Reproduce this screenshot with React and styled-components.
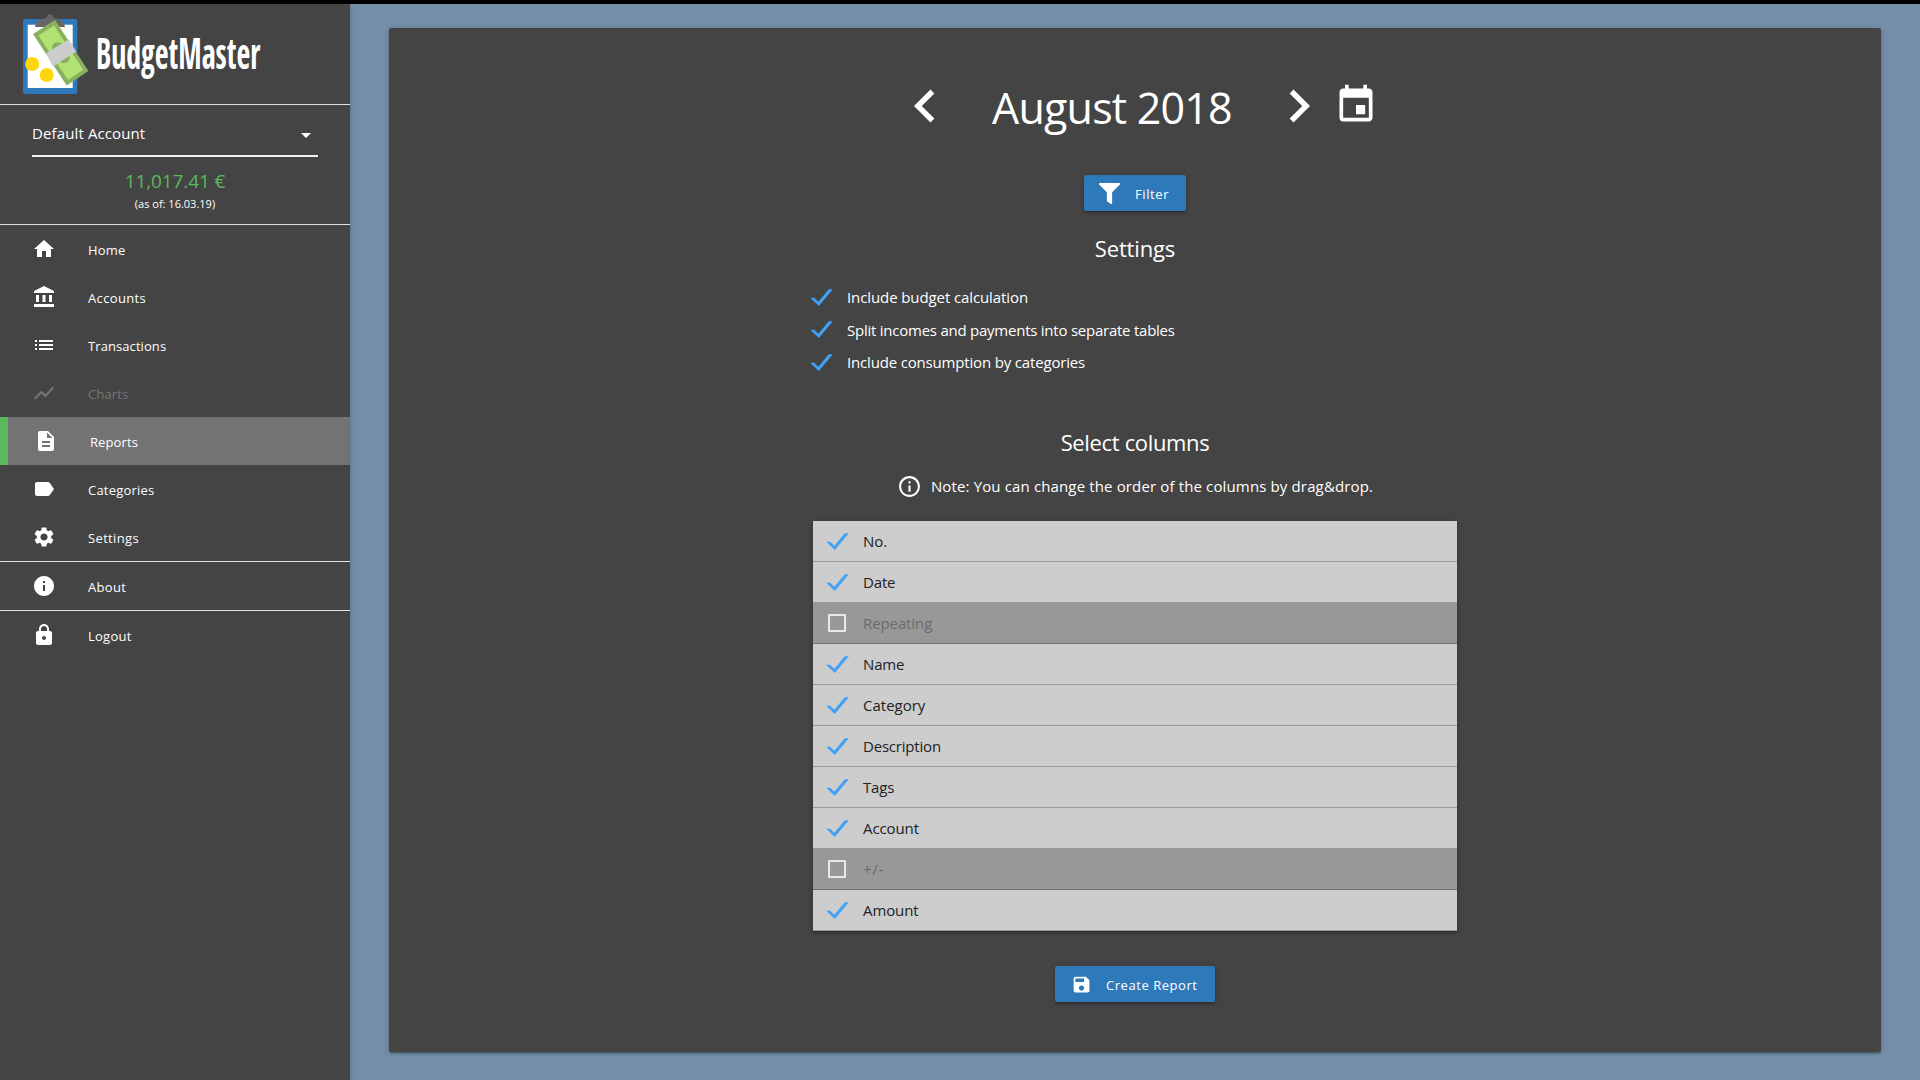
import React from 'react';
import styled, { createGlobalStyle } from 'styled-components';
import {
  MdHome, MdAccountBalance, MdList, MdShowChart, MdDescription, MdLabel, MdSettings,
  MdInfo, MdLock, MdChevronLeft, MdChevronRight, MdEvent, MdInfoOutline, MdSave, MdArrowDropDown,
} from 'react-icons/md';
import { FaFilter } from 'react-icons/fa';

const GlobalStyle = createGlobalStyle`
  *, *::before, *::after { box-sizing: border-box; }
  body {
    margin: 0;
    background: #738fa7;
    color: #fff;
    font-family: "Segoe UI", "Open Sans", "Noto Sans", sans-serif;
    font-size: 15px;
    overflow: hidden;
  }
  svg { display: block; flex: none; }
`;

const Page = styled.div`
  display: flex;
  height: 1080px;
  border-top: 4px solid #000;
`;

const Sidebar = styled.aside`
  width: 350px;
  flex: none;
  background: #444;
  box-shadow: 0 2px 2px 0 rgba(0, 0, 0, 0.14), 0 3px 1px -2px rgba(0, 0, 0, 0.12), 0 1px 5px 0 rgba(0, 0, 0, 0.2);
`;

const Divider = styled.hr`
  height: 1px;
  margin: 0;
  border: 0;
  background: #e0e0e0;
`;

const Brand = styled.div`
  display: flex;
  height: 100px;
  padding: 8px 0 0 20px;
`;

const BrandName = styled.div`
  margin: 12px 0 0 6px;
  font-family: "Open Sans Condensed", "Open Sans", sans-serif;
  font-stretch: 75%;
  font-weight: 700;
  font-size: 43px;
  line-height: 58px;
  transform: scaleX(0.695);
  transform-origin: 0 50%;
`;

const AccountBox = styled.div`
  height: 119px;
  padding: 10px 32px 0;
`;

const AccountSelect = styled.div`
  display: flex;
  align-items: center;
  justify-content: space-between;
  height: 42px;
  border-bottom: 2px solid #f2f2f2;
  letter-spacing: 0.12px;
  span { padding-bottom: 4px; }
`;

const Balance = styled.div`
  margin-top: 11px;
  color: #5cb85c;
  font-size: 19px;
  line-height: 26px;
  letter-spacing: -0.12px;
  text-align: center;
`;

const BalanceDate = styled.div`
  margin-top: 1px;
  font-size: 11px;
  line-height: 18px;
  text-align: center;
`;

const NavItem = styled.div`
  display: flex;
  align-items: center;
  gap: 32px;
  height: 48px;
  padding-left: ${p => (p.$active ? 26 : 32)}px;
  border-left: ${p => (p.$active ? '8px solid #5cb85c' : '0')};
  background: ${p => (p.$active ? '#737373' : 'transparent')};
  color: ${p => (p.$disabled ? '#757575' : '#fff')};
`;

const NavLabel = styled.span`
  padding-top: 2px;
  font-size: 13px;
  font-weight: 500;
  letter-spacing: ${p => p.$ls || 0}px;
`;

const Main = styled.main`
  flex: 1;
  padding: 24px 39px 0;
`;

const Card = styled.section`
  display: flex;
  flex-direction: column;
  align-items: center;
  height: 1024px;
  padding-top: 44px;
  border-radius: 2px;
  background: #444;
  box-shadow: 0 2px 2px 0 rgba(0, 0, 0, 0.14), 0 3px 1px -2px rgba(0, 0, 0, 0.12), 0 1px 5px 0 rgba(0, 0, 0, 0.2);
`;

const MonthBar = styled.div`
  display: flex;
  align-items: center;
  height: 67px;
  > svg:last-child { margin: 0 0 2px 2px; }
`;

const Month = styled.h1`
  width: 308px;
  margin: 0;
  padding-top: 3px;
  font-size: 43px;
  font-weight: 400;
  line-height: 65px;
  letter-spacing: -0.8px;
  text-align: center;
`;

const Button = styled.div`
  display: flex;
  align-items: center;
  width: ${p => p.$width}px;
  height: 36px;
  margin-top: ${p => p.$top}px;
  padding: ${p => p.$pad};
  gap: ${p => p.$gap}px;
  border-radius: 2px;
  background: #2e79b9;
  font-size: 13px;
  font-weight: 500;
  letter-spacing: ${p => p.$ls}px;
  white-space: nowrap;
  box-shadow: 0 2px 2px 0 rgba(0, 0, 0, 0.14), 0 3px 1px -2px rgba(0, 0, 0, 0.12), 0 1px 5px 0 rgba(0, 0, 0, 0.2);
  span { padding-top: 2px; }
`;

const Heading = styled.h2`
  margin: ${p => p.$top}px 0 0;
  font-size: 22px;
  font-weight: 400;
  line-height: 30px;
  letter-spacing: ${p => p.$ls}px;
`;

const Options = styled.div`
  width: 650px;
  margin-top: 18px;
`;

const Option = styled.div`
  display: flex;
  align-items: center;
  gap: 14px;
  height: 32.5px;
`;

const Text = styled.span`
  letter-spacing: ${p => p.$ls || 0}px;
  white-space: nowrap;
`;

const Note = styled.div`
  display: flex;
  align-items: center;
  gap: 9px;
  height: 24px;
  margin-top: 17px;
`;

const Columns = styled.div`
  width: 644px;
  margin-top: 23px;
  box-shadow: 0 2px 2px 0 rgba(0, 0, 0, 0.14), 0 3px 1px -2px rgba(0, 0, 0, 0.12), 0 1px 5px 0 rgba(0, 0, 0, 0.2);
`;

const Column = styled.div`
  display: flex;
  align-items: center;
  gap: 14px;
  height: 41px;
  padding-left: 13px;
  border-bottom: 1px solid ${p => (p.$off ? '#717171' : '#999')};
  background: ${p => (p.$off ? '#989898' : '#cdcdcd')};
  color: ${p => (p.$off ? '#6b6b6b' : '#212121')};
`;

const EmptyBox = styled.span`
  width: 18px;
  height: 18px;
  margin: 0 3px 0 2px;
  border: 2px solid #e8e8e8;
  border-radius: 1px;
`;

const Check = () => (
  <svg width="23" height="17" viewBox="0 0 23 17">
    <path d="M0.2 8.8H4.2L8.3 12.8L18.8 0.2H22.9L8.8 16.9Z" fill="#42a1f5" />
  </svg>
);

const Logo = () => (
  <svg width="70" height="84" viewBox="20 12 70 84">
    <rect x="23" y="19" width="54.3" height="75" rx="2.5" fill="#2e79b9" />
    <rect x="27.7" y="24.7" width="45" height="63.3" fill="#fff" />
    <path d="M35 27C35.500 22 40 18.500 46.500 18C47 13 53 13 53.500 18C60 18.500 64.500 22 65 27Z" fill="#666" />
    <path d="M55 20L33 34L66.700 85.500L88.400 71Z" fill="#8bb05d" />
    <path d="M54 25.500L38.500 35.500L68 80L83.200 69.800Z" fill="#b0e274" />
    <ellipse cx="60.800" cy="52.700" rx="7.500" ry="11.500" transform="rotate(-33 60.800 52.700)" fill="#8bb05d" />
    <path d="M46 53.300L69 39.300L76.200 51.500L53 66.500Z" fill="#ccc" />
    <circle cx="32.200" cy="64" r="7" fill="#ffd60a" />
    <circle cx="46.700" cy="75" r="7" fill="#ffd60a" />
  </svg>
);

const primaryNav = [
  { label: 'Home', icon: MdHome, ls: 0.2 },
  { label: 'Accounts', icon: MdAccountBalance, ls: 0.35 },
  { label: 'Transactions', icon: MdList, ls: 0.08 },
  { label: 'Charts', icon: MdShowChart, disabled: true, ls: 0.15 },
  { label: 'Reports', icon: MdDescription, active: true, ls: 0.1 },
  { label: 'Categories', icon: MdLabel, ls: 0.2 },
  { label: 'Settings', icon: MdSettings, ls: 0.35 },
];

const options = [
  ['Include budget calculation', -0.1],
  ['Split incomes and payments into separate tables', -0.24],
  ['Include consumption by categories', -0.17],
];

const columns = [
  { name: 'No.' },
  { name: 'Date', ls: -0.15 },
  { name: 'Repeating', off: true, ls: -0.1 },
  { name: 'Name', ls: -0.15 },
  { name: 'Category' },
  { name: 'Description', ls: -0.2 },
  { name: 'Tags', ls: -0.2 },
  { name: 'Account', ls: -0.1 },
  { name: '+/-', off: true, ls: 0.7 },
  { name: 'Amount', ls: -0.1 },
];

const NavEntry = ({ item }) => {
  const Icon = item.icon;
  return (
    <NavItem $active={item.active} $disabled={item.disabled}>
      <Icon size={24} />
      <NavLabel $ls={item.ls}>{item.label}</NavLabel>
    </NavItem>
  );
};

export default function App() {
  return (
    <>
      <GlobalStyle />
      <Page>
        <Sidebar>
          <Brand>
            <Logo />
            <BrandName>BudgetMaster</BrandName>
          </Brand>
          <Divider />
          <AccountBox>
            <AccountSelect>
              <span>Default Account</span>
              <MdArrowDropDown size={24} />
            </AccountSelect>
            <Balance>11,017.41 €</Balance>
            <BalanceDate>(as of: 16.03.19)</BalanceDate>
          </AccountBox>
          <Divider />
          {primaryNav.map(item => <NavEntry key={item.label} item={item} />)}
          <Divider />
          <NavEntry item={{ label: 'About', icon: MdInfo, ls: 0.3 }} />
          <Divider />
          <NavEntry item={{ label: 'Logout', icon: MdLock, ls: 0.25 }} />
        </Sidebar>
        <Main>
          <Card>
            <MonthBar>
              <MdChevronLeft size={66} />
              <Month>August 2018</Month>
              <MdChevronRight size={66} />
              <MdEvent size={44} />
            </MonthBar>
            <Button $width={102} $top={36} $pad="0 0 0 15px" $gap={15} $ls={0.6}>
              <FaFilter size={21} />
              <span>Filter</span>
            </Button>
            <Heading $top={22} $ls={-0.15}>Settings</Heading>
            <Options>
              {options.map(([label, ls]) => (
                <Option key={label}>
                  <Check />
                  <Text $ls={ls}>{label}</Text>
                </Option>
              ))}
            </Options>
            <Heading $top={48.5} $ls={-0.35}>Select columns</Heading>
            <Note>
              <MdInfoOutline size={25} />
              <Text $ls={0.14}>Note: You can change the order of the columns by drag&amp;drop.</Text>
            </Note>
            <Columns>
              {columns.map(c => (
                <Column key={c.name} $off={c.off}>
                  {c.off ? <EmptyBox /> : <Check />}
                  <Text $ls={c.ls}>{c.name}</Text>
                </Column>
              ))}
            </Columns>
            <Button $width={160} $top={35} $pad="0 0 0 16px" $gap={14} $ls={0.55}>
              <MdSave size={21} />
              <span>Create Report</span>
            </Button>
          </Card>
        </Main>
      </Page>
    </>
  );
}
